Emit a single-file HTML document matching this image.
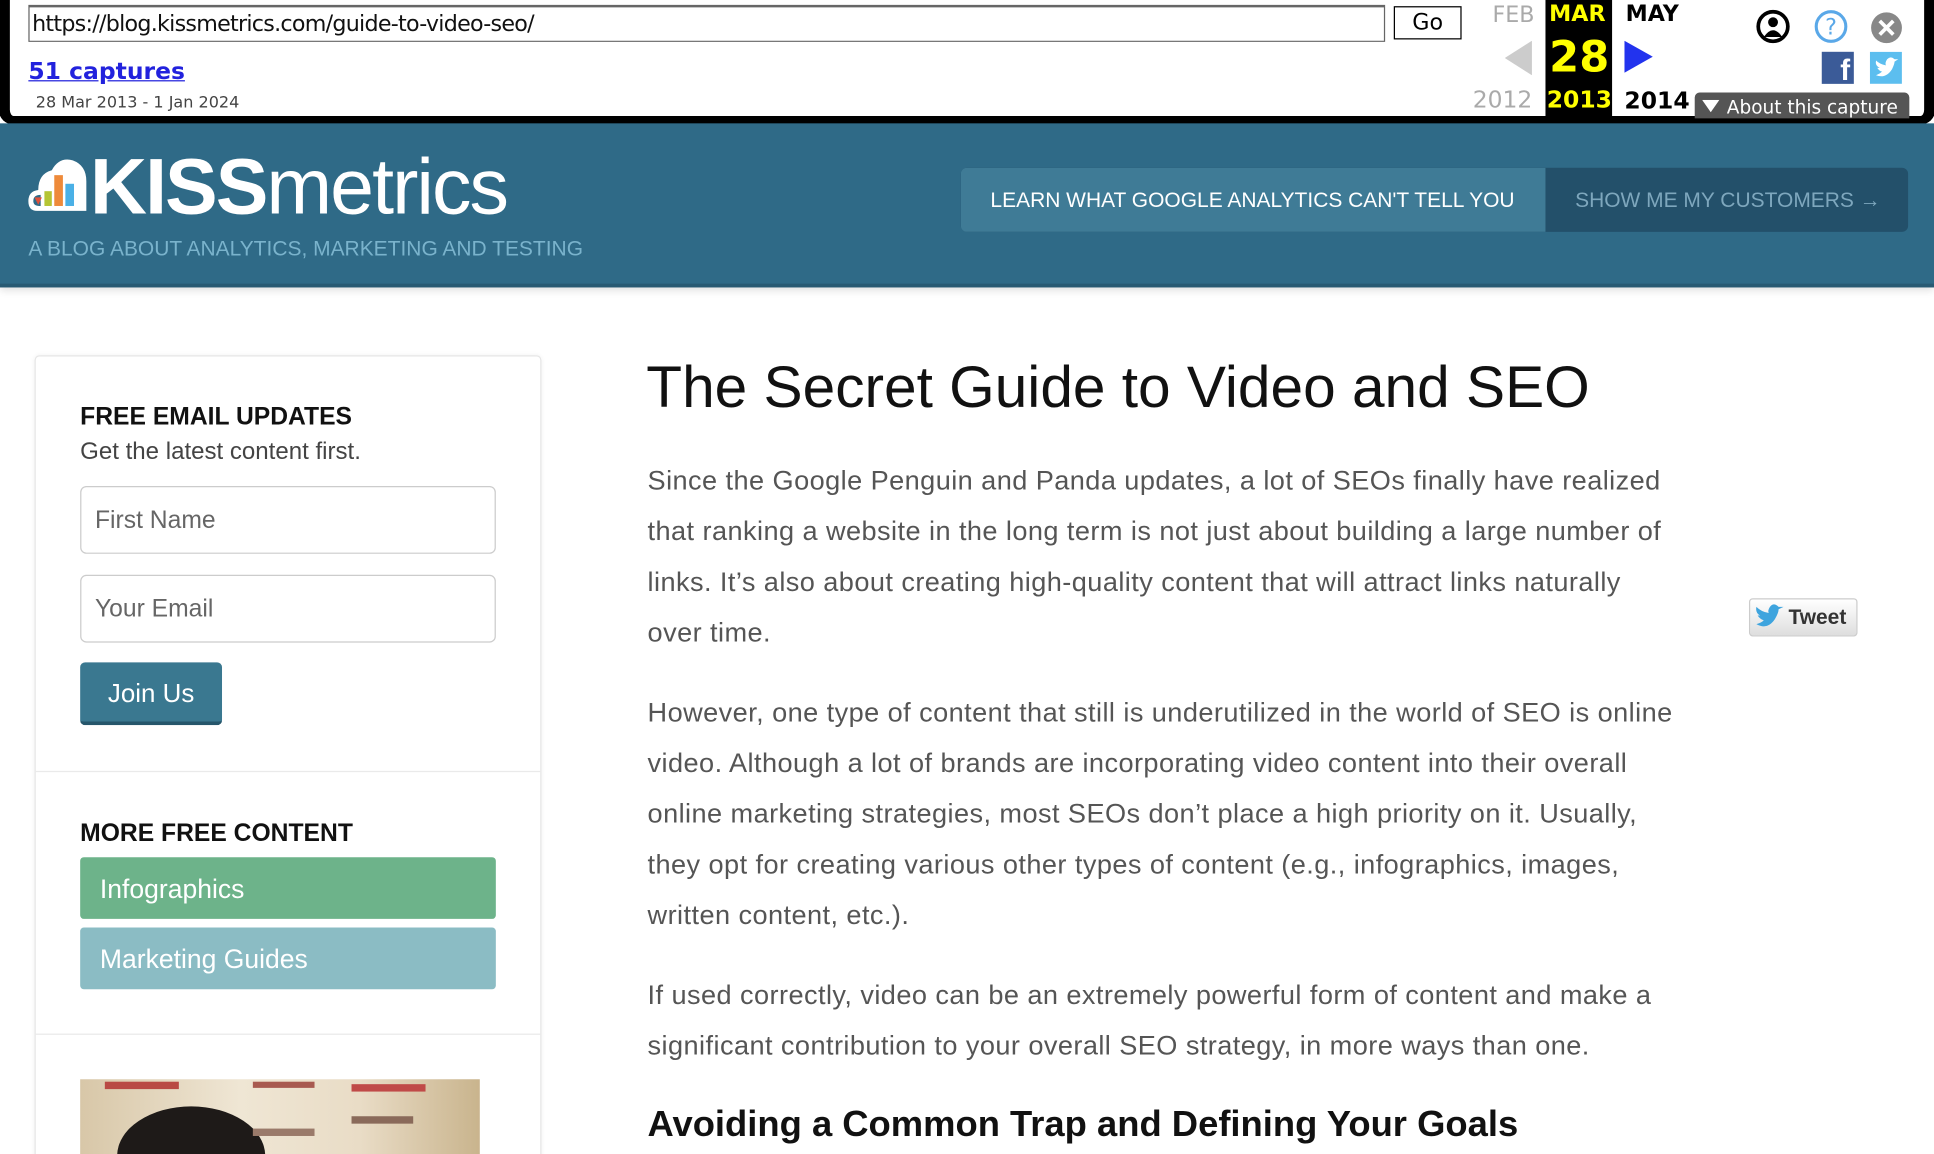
<!DOCTYPE html>
<html><head><meta charset="utf-8"><style>
html,body{margin:0;padding:0;overflow:hidden;width:1934px;height:1154px;background:#fff}
#w{position:absolute;left:0;top:0;width:1568px;height:936px;transform:scale(1.23342);transform-origin:0 0;font-family:"Liberation Sans",Arial,sans-serif;overflow:hidden}
.a{position:absolute;white-space:nowrap}
p.t{margin:0;position:absolute;left:525px;font-size:22px;letter-spacing:0.35px;line-height:41px;color:#555;white-space:nowrap}
</style></head><body><div id="w">
<div class="a" style="left:8px;top:-10px;width:1552px;height:104px;border:0 solid #000;border-width:0 9px 7px 9px;border-radius:0 0 12px 12px;box-sizing:content-box;margin-left:-9px;background:#fff"></div>
<div class="a" style="left:23px;top:4px;width:1096px;height:27px;border:1px solid #666;border-top-width:2px;font-family:'DejaVu Sans',sans-serif;font-size:18px;letter-spacing:-0.6px;line-height:27px;padding-left:2px;color:#111">https://blog.kissmetrics.com/guide-to-video-seo/</div>
<div class="a" style="left:1130px;top:5px;width:53px;height:25px;border:1px solid #000;font-size:18px;line-height:25px;text-align:center;font-family:'DejaVu Sans',sans-serif">Go</div>
<div class="a" style="left:23px;top:47px;font-size:19px;color:#2222dd;text-decoration:underline;font-family:'DejaVu Sans',sans-serif;font-weight:bold">51 captures</div>
<div class="a" style="left:29px;top:76px;font-size:13px;color:#444;font-family:'DejaVu Sans',sans-serif">28 Mar 2013 - 1 Jan 2024</div>
<div class="a" style="left:1210px;top:2px;font-size:18px;color:#aaa;font-family:'DejaVu Sans',sans-serif">FEB</div>
<div class="a" style="left:1253px;top:0;width:54px;height:95px;background:#000"></div>
<div class="a" style="left:1256px;top:1px;font-size:18px;color:#ff0;font-weight:bold;font-family:'DejaVu Sans',sans-serif">MAR</div>
<div class="a" style="left:1256px;top:27px;font-size:35px;color:#ff0;font-weight:bold;font-family:'DejaVu Sans',sans-serif">28</div>
<div class="a" style="left:1254px;top:70px;font-size:19px;color:#ff0;font-weight:bold;font-family:'DejaVu Sans',sans-serif">2013</div>
<div class="a" style="left:1318px;top:1px;font-size:18px;color:#000;font-weight:bold;font-family:'DejaVu Sans',sans-serif">MAY</div>
<div class="a" style="left:1194px;top:70px;font-size:19px;color:#aaa;font-family:'DejaVu Sans',sans-serif">2012</div>
<div class="a" style="left:1317px;top:71px;font-size:19px;color:#000;font-weight:bold;font-family:'DejaVu Sans',sans-serif">2014</div>
<svg class="a" style="left:1220px;top:33px" width="24" height="28"><polygon points="22,0 22,28 0,14" fill="#ccc"/></svg>
<svg class="a" style="left:1317px;top:33px" width="24" height="28"><polygon points="0,0 0,26 23,13" fill="#2233ee"/></svg>
<div class="a" style="left:1374px;top:75px;width:174px;height:21px;background:#555;border-radius:4px 4px 0 0;color:#fff;font-size:15px;line-height:24px;font-family:'DejaVu Sans',sans-serif;padding-left:26px;box-sizing:border-box">About this capture</div>
<svg class="a" style="left:1380px;top:81px" width="14" height="10"><polygon points="0,0 14,0 7,10" fill="#fff"/></svg>
<svg class="a" style="left:1423px;top:7px" width="29" height="29"><circle cx="14.5" cy="14.5" r="12" fill="none" stroke="#000" stroke-width="3"/><circle cx="14.5" cy="11" r="4" fill="#000"/><path d="M7 23 Q14.5 12 22 23" fill="#000"/></svg>
<svg class="a" style="left:1470px;top:7px" width="29" height="29"><circle cx="14.5" cy="14.5" r="12" fill="none" stroke="#5aa8e8" stroke-width="2.5"/><text x="14.5" y="21" font-size="18" text-anchor="middle" fill="#5aa8e8" font-family="DejaVu Sans">?</text></svg>
<svg class="a" style="left:1516px;top:9px" width="27" height="27"><circle cx="13.5" cy="13.5" r="12.5" fill="#888"/><path d="M8 8 L19 19 M19 8 L8 19" stroke="#fff" stroke-width="3"/></svg>
<div class="a" style="left:1477px;top:42px;width:26px;height:26px;background:#3b5b98;color:#fff;font-weight:bold;font-size:24px;text-align:right;line-height:32px;padding-right:3px;box-sizing:border-box">f</div>
<svg class="a" style="left:1516px;top:42px" width="26" height="26"><rect width="26" height="26" fill="#5cbeef"/><path d="M5 19 Q13 22 18 14 Q20 10 20 8 L23 6 L20 6 Q17 3 14 6 Q12 9 13 11 Q8 10 5 7 Q4 11 8 13 L6 13 Q8 16 10 16 Q8 18 5 19Z" fill="#fff"/></svg>
<div class="a" style="left:0;top:100px;width:1568px;height:130px;background:#2f6a87;border-bottom:3px solid #285a73;box-shadow:0 3px 6px rgba(0,0,0,0.12)"></div>
<svg class="a" style="left:22px;top:125px" width="50" height="48"><path d="M8 46 Q1 46 1 38 Q1 30 9 29 Q9 16 20 13 Q26 2 37 5 Q48 9 48 22 L48 46 Z" fill="#fff"/><path d="M10 42 Q5 42 5 38 Q5 33 11 33 L11 42Z" fill="#2f6a87"/><rect x="14" y="30" width="6" height="12" fill="#b5c534"/><rect x="22" y="17" width="7" height="25" fill="#ee8a3a"/><rect x="31" y="24" width="7" height="18" fill="#4ab0e6"/><polygon points="6,35 12,35 9,41" fill="#e0503a"/></svg>
<div class="a" style="left:73px;top:113px;font-size:64px;color:#fff;letter-spacing:-1.6px;line-height:76px"><b>KISS</b>metrics</div>
<div class="a" style="left:23px;top:192px;font-size:17px;color:#7ab3cc">A BLOG ABOUT ANALYTICS, MARKETING AND TESTING</div>
<div class="a" style="left:779px;top:136px;width:768px;height:52px;border-radius:5px;background:#23506a;overflow:hidden"><div style="width:474px;height:52px;background:#3f7b96"></div></div>
<div class="a" style="left:803px;top:153px;font-size:17px;color:#fff">LEARN WHAT GOOGLE ANALYTICS CAN'T TELL YOU</div>
<div class="a" style="left:1277px;top:153px;font-size:17px;color:#7ea7bd">SHOW ME MY CUSTOMERS →</div>
<div class="a" style="left:28px;top:288px;width:409px;height:700px;border:1px solid #e6e6e6;border-radius:4px;box-shadow:0 0 4px rgba(0,0,0,0.06)"></div>
<div class="a" style="left:65px;top:327px;font-size:20px;font-weight:bold;color:#111">FREE EMAIL UPDATES</div>
<div class="a" style="left:65px;top:355px;font-size:19.5px;color:#444">Get the latest content first.</div>
<div class="a" style="left:65px;top:394px;width:335px;height:53px;border:1px solid #ccc;border-radius:5px;font-size:20px;color:#666;line-height:55px;text-indent:11px">First Name</div>
<div class="a" style="left:65px;top:466px;width:335px;height:53px;border:1px solid #ccc;border-radius:5px;font-size:20px;color:#666;line-height:55px;text-indent:11px">Your Email</div>
<div class="a" style="left:65px;top:537px;width:115px;height:48px;background:#3a7890;border-bottom:3px solid #26566b;border-radius:4px;color:#fff;font-size:21px;line-height:52px;text-align:center">Join Us</div>
<div class="a" style="left:29px;top:625px;width:409px;height:1px;background:#eaeaea"></div>
<div class="a" style="left:65px;top:665px;font-size:20px;font-weight:bold;color:#111">MORE FREE CONTENT</div>
<div class="a" style="left:65px;top:695px;width:337px;height:50px;background:#6db38a;border-radius:3px;color:#fff;font-size:21.5px;line-height:52px;text-indent:16px">Infographics</div>
<div class="a" style="left:65px;top:752px;width:337px;height:50px;background:#8bbcc4;border-radius:3px;color:#fff;font-size:21.5px;line-height:52px;text-indent:16px">Marketing Guides</div>
<div class="a" style="left:29px;top:838px;width:409px;height:1px;background:#eaeaea"></div>
<div class="a" style="left:65px;top:875px;width:324px;height:70px;background:linear-gradient(90deg,#d8c7a8,#efe6d4 40%,#e9dcc6 70%,#c9b48d);overflow:hidden">
<div style="position:absolute;left:30px;top:22px;width:120px;height:80px;border-radius:50%;background:#1e1a18"></div>
<div style="position:absolute;left:20px;top:2px;width:60px;height:6px;background:#b94a44"></div>
<div style="position:absolute;left:140px;top:2px;width:50px;height:5px;background:#a85a50"></div>
<div style="position:absolute;left:220px;top:4px;width:60px;height:6px;background:#c04a48"></div>
<div style="position:absolute;left:220px;top:30px;width:50px;height:6px;background:#8a6a5a"></div>
<div style="position:absolute;left:140px;top:40px;width:50px;height:6px;background:#9a7a6a"></div>
</div>
<div class="a" style="left:524px;top:286px;font-size:47.5px;color:#111;line-height:58px">The Secret Guide to Video and SEO</div>
<p class="t" style="top:369px">Since the Google Penguin and Panda updates, a lot of SEOs finally have realized<br>that ranking a website in the long term is not just about building a large number of<br>links. It’s also about creating high-quality content that will attract links naturally<br>over time.</p>
<p class="t" style="top:557px">However, one type of content that still is underutilized in the world of SEO is online<br>video. Although a lot of brands are incorporating video content into their overall<br>online marketing strategies, most SEOs don’t place a high priority on it. Usually,<br>they opt for creating various other types of content (e.g., infographics, images,<br>written content, etc.).</p>
<p class="t" style="top:786px">If used correctly, video can be an extremely powerful form of content and make a<br>significant contribution to your overall SEO strategy, in more ways than one.</p>
<div class="a" style="left:525px;top:895px;font-size:29.5px;font-weight:bold;color:#111">Avoiding a Common Trap and Defining Your Goals</div>
<div class="a" style="left:1418px;top:485px;width:86px;height:29px;border:1px solid #ccc;border-radius:3px;background:linear-gradient(#fff,#dedede);font-size:17px;font-weight:bold;color:#333;line-height:29px;text-indent:31px">Tweet</div>
<svg class="a" style="left:1422px;top:489px" width="26" height="22"><path d="M2 17 Q11 22 17 13 Q20 8 20 5 L24 3 L20 3 Q16 -1 13 3 Q11 6 12 8 Q6 7 2 3 Q1 8 5 10 L3 10 Q5 13 8 14 Q6 16 2 17Z" fill="#3ea4de"/></svg>
</div></body></html>
